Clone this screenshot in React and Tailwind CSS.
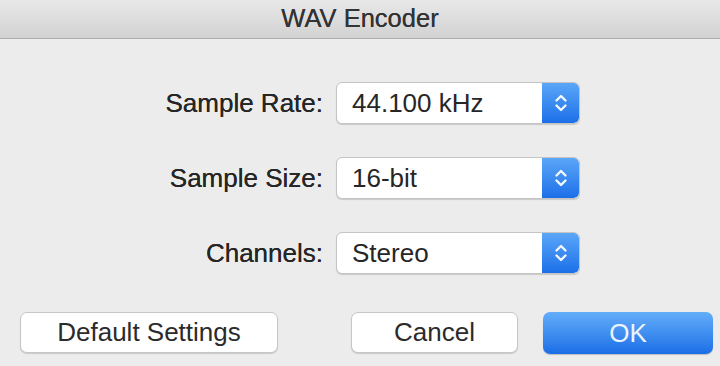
import React from 'react';

const Stepper = () => (
  <div className="w-[37px] h-full rounded-r-[5px] bg-gradient-to-b from-[#5aa6f8] to-[#1c6fe8] flex items-center justify-center">
    <svg width="16" height="24" viewBox="0 0 16 24" fill="none" stroke="#f4f8ff" strokeWidth="2.4" strokeLinecap="round" strokeLinejoin="round">
      <path d="M3.5 9.5 L8 5 L12.5 9.5" />
      <path d="M3.5 14.5 L8 19 L12.5 14.5" />
    </svg>
  </div>
);

const Select = ({ value }) => (
  <div className="w-[244px] h-[42px] flex bg-white rounded-[6px] border border-[#c4c4c4] shadow-[0_1px_1px_rgba(0,0,0,0.15)] overflow-hidden">
    <div className="flex-1 flex items-center pl-[15px] text-[26px] text-[#262626]">{value}</div>
    <Stepper />
  </div>
);

const App = () => {
  const rows = [
    { label: 'Sample Rate:', value: '44.100 kHz' },
    { label: 'Sample Size:', value: '16-bit' },
    { label: 'Channels:', value: 'Stereo' },
  ];

  return (
    <div className="w-[720px] h-[366px] bg-[#ececec] overflow-hidden" style={{ fontFamily: '"Liberation Sans", Arial, sans-serif' }}>
      {/* Title bar */}
      <div className="h-[39px] bg-gradient-to-b from-[#e9e8e9] to-[#d3d2d3] border-b border-[#adadad] flex items-center justify-center">
        <span className="text-[25.5px] text-[#333333] leading-none [text-shadow:0_0_0.6px_#333]">WAV Encoder</span>
      </div>

      {/* Form */}
      <div className="grid grid-cols-[323px_244px] gap-x-[13px] gap-y-[33px] pt-[43px]">
        {rows.map((row) => (
          <React.Fragment key={row.label}>
            <div className="flex items-center justify-end text-[26px] text-[#262626] [text-shadow:0_0_0.6px_#262626]">{row.label}</div>
            <Select value={row.value} />
          </React.Fragment>
        ))}
      </div>

      {/* Buttons */}
      <div className="flex justify-between pl-[20px] pr-[7px] mt-[38px]">
        <button className="w-[258px] h-[41px] bg-white rounded-[7px] border border-[#c6c6c6] shadow-[0_1px_1px_rgba(0,0,0,0.15)] text-[26px] text-[#2b2b2b]">
          Default Settings
        </button>
        <div className="flex gap-[25px]">
          <button className="w-[167px] h-[41px] bg-white rounded-[7px] border border-[#c6c6c6] shadow-[0_1px_1px_rgba(0,0,0,0.15)] text-[26px] text-[#2b2b2b]">
            Cancel
          </button>
          <button className="w-[170px] h-[42px] rounded-[7px] bg-gradient-to-b from-[#63adf9] to-[#1a6ee6] shadow-[0_1px_1px_rgba(0,0,0,0.2)] text-[26px] text-[#eef4ff]">
            OK
          </button>
        </div>
      </div>
    </div>
  );
};

export default App;
